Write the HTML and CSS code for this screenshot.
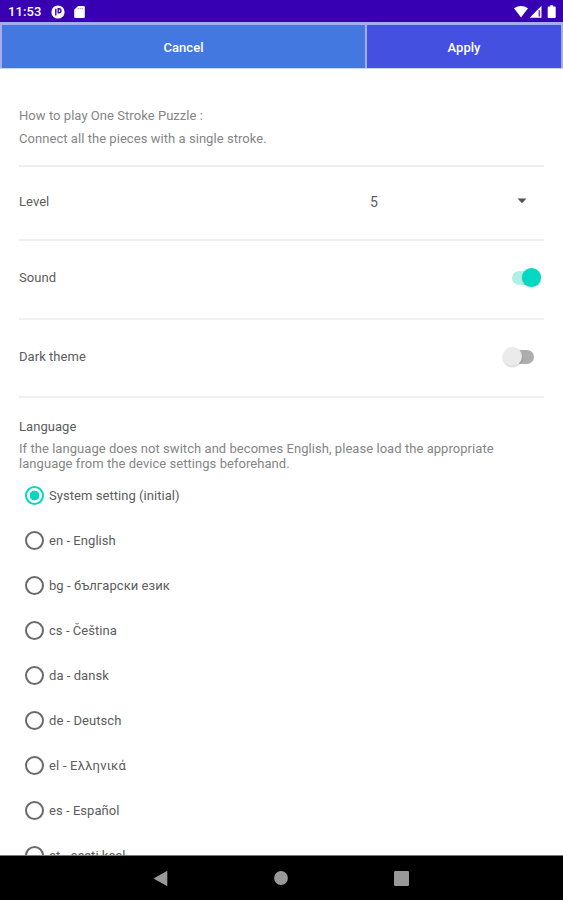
FILE: index.html
```html
<!DOCTYPE html>
<html lang="en">
<head>
<meta charset="utf-8">
<title>Settings</title>
<link rel="stylesheet" href="styles.css">
</head>
<body>
<header class="status">
  <span class="clock">11:53</span>
  <svg class="status-app" width="14" height="14" viewBox="0 0 14 14"><circle cx="7" cy="7" r="6.6" fill="#fff"/><path d="M4.800 10.500V3.800M7.200 3.800H8a1.900 1.900 0 0 1 0 3.900H7.200z" fill="none" stroke="#3700b3" stroke-width="1.400"/></svg>
  <svg class="status-sd" width="11" height="12" viewBox="0 0 11 12"><path d="M4 0h5.500q1.300 0 1.300 1.300v9.400q0 1.300-1.300 1.300h-8Q.2 12 .2 10.700V3.800z" fill="#fff"/><path d="M4.200 2v1.300M6.200 2v1.300M8.200 2v1.300" stroke="#3700b3" stroke-width=".8" opacity=".6"/></svg>
  <svg class="status-right" width="44" height="14" viewBox="0 0 44 14"><path d="M0 3.300Q7 -1.300 14 3.300L7 12.500z" fill="#fff"/><path d="M27.500.8V12.700H15.700z" fill="#fff"/><path d="M24.500 5.200h1.700v6.300h-1.700z" fill="#3700b3" opacity=".75"/><path d="M36.200.3h3v1.300h1.600q.9 0 .9.900v9.500q0 .9-.9.900h-6.200q-.9 0-.9-.9V2.500q0-.9.900-.9h1.600z" fill="#fff"/></svg>
</header>
<div class="actions">
  <div class="action cancel">Cancel</div>
  <div class="action apply">Apply</div>
</div>
<main class="content">
  <section class="intro">
    <p>How to play One Stroke Puzzle :</p>
    <p class="intro-detail">Connect all the pieces with a single stroke.</p>
  </section>
  <section class="row level">
    <span>Level</span>
    <div class="spinner"><span>5</span><svg width="10" height="6" viewBox="0 0 10 6"><path d="M.5.500h9L5 5.200z" fill="#555"/></svg></div>
  </section>
  <section class="row sound">
    <span>Sound</span>
    <span class="switch on"><span class="thumb"></span></span>
  </section>
  <section class="row dark">
    <span>Dark theme</span>
    <span class="switch off"><span class="thumb"></span></span>
  </section>
  <section class="language">
    <h2>Language</h2>
    <p class="note">If the language does not switch and becomes English, please load the appropriate<br>language from the device settings beforehand.</p>
    <ul class="options">
      <li><i class="radio checked"></i><span>System setting (initial)</span></li>
      <li><i class="radio"></i><span>en - English</span></li>
      <li><i class="radio"></i><span>bg - български език</span></li>
      <li><i class="radio"></i><span>cs - Čeština</span></li>
      <li><i class="radio"></i><span>da - dansk</span></li>
      <li><i class="radio"></i><span>de - Deutsch</span></li>
      <li><i class="radio"></i><span class="greek">el - Ελληνικά</span></li>
      <li><i class="radio"></i><span>es - Español</span></li>
      <li><i class="radio"></i><span>et - eesti keel</span></li>
    </ul>
  </section>
</main>
<nav class="navbar">
  <svg width="15" height="17" viewBox="0 0 15 17"><path d="M.5 8.500L14.300.800v15.400z" fill="#999"/></svg>
  <svg width="14" height="14" viewBox="0 0 14 14"><circle cx="7" cy="7" r="6.900" fill="#999"/></svg>
  <svg width="15" height="15" viewBox="0 0 15 15"><rect width="15" height="15" rx="1.200" fill="#999"/></svg>
</nav>
</body>
</html>
```
FILE: styles.css
```css
* { box-sizing: border-box; }
body {
  margin: 0;
  width: 563px;
  height: 900px;
  overflow: hidden;
  display: flex;
  flex-direction: column;
  background: #fff;
  color: #5c5c5c;
  font: 13px/16px Roboto, "Liberation Sans", sans-serif;
  letter-spacing: .05px;
  white-space: nowrap;
}
p, h2, ul { margin: 0; padding: 0; }
.status {
  height: 22px;
  flex: none;
  display: flex;
  align-items: center;
  padding: 2px 5px 0 8px;
  background: #3700b3;
  color: #fff;
}
.clock { font-weight: 500; width: 43px; letter-spacing: .1px; }
.status-sd { margin-left: 9px; }
.status-right { margin-left: auto; }
.actions {
  height: 47px;
  flex: none;
  display: grid;
  grid-template-columns: 363px 194px;
  gap: 2px;
  padding: 3px 2px 0;
  background: #a3adf0;
  border-bottom: 1px solid #c8d5f5;
}
.action {
  display: flex;
  align-items: center;
  justify-content: center;
  padding-top: 2px;
  color: #fff;
  font-weight: 500;
}
.cancel { background: #4278e0; }
.apply { background: #4350e0; }
.content {
  flex: 1;
  min-height: 0;
  overflow: hidden;
  padding: 0 19px;
}
.intro {
  height: 98px;
  padding-top: 39px;
  color: #858585;
  border-bottom: 2px solid #eee;
}
.intro-detail { margin-top: 7px; }
.row {
  display: flex;
  align-items: center;
  justify-content: space-between;
  border-bottom: 2px solid #f0f0f0;
}
.level { height: 74px; padding-bottom: 2px; }
.level svg { margin-bottom: 2px; }
.sound { height: 79px; padding-bottom: 4px; }
.dark { height: 78px; padding-bottom: 3px; }
.spinner {
  width: 174px;
  display: flex;
  align-items: center;
  justify-content: space-between;
  padding-right: 17px;
  font-size: 14px;
}
.switch {
  width: 29px;
  height: 14px;
  border-radius: 7px;
  display: flex;
  align-items: center;
}
.on { background: #aff1e5; justify-content: flex-end; margin-right: 3px; }
.off { background: #adadad; margin-right: 10px; }
.thumb {
  width: 19px;
  height: 19px;
  flex: none;
  border-radius: 50%;
  box-shadow: 0 1px 2px rgba(0,0,0,.2);
}
.on .thumb { background: #03d8c1; }
.off .thumb { background: #ebebeb; margin-left: -2px; }
.language { padding-top: 21px; }
h2 { font: inherit; }
.note { margin-top: 6px; line-height: 15px; color: #858585; }
.options { list-style: none; padding: 2px 0 0 6px; }
.options li {
  height: 45px;
  display: flex;
  align-items: center;
  gap: 6px;
}
.options span { padding-top: 1px; }
.greek { letter-spacing: .2px; }
.radio {
  width: 19px;
  height: 19px;
  margin-right: -1px;
  border: 2px solid #6a6a6a;
  border-radius: 50%;
}
.checked {
  border-color: #03d8c1;
  background: radial-gradient(circle, #03d8c1 4.500px, #fff 5.200px);
}
.navbar {
  height: 45px;
  flex: none;
  display: flex;
  align-items: center;
  justify-content: space-between;
  padding: 0 154px 0 153px;
  background: #000;
  border-top: 1px solid #777;
}
```
